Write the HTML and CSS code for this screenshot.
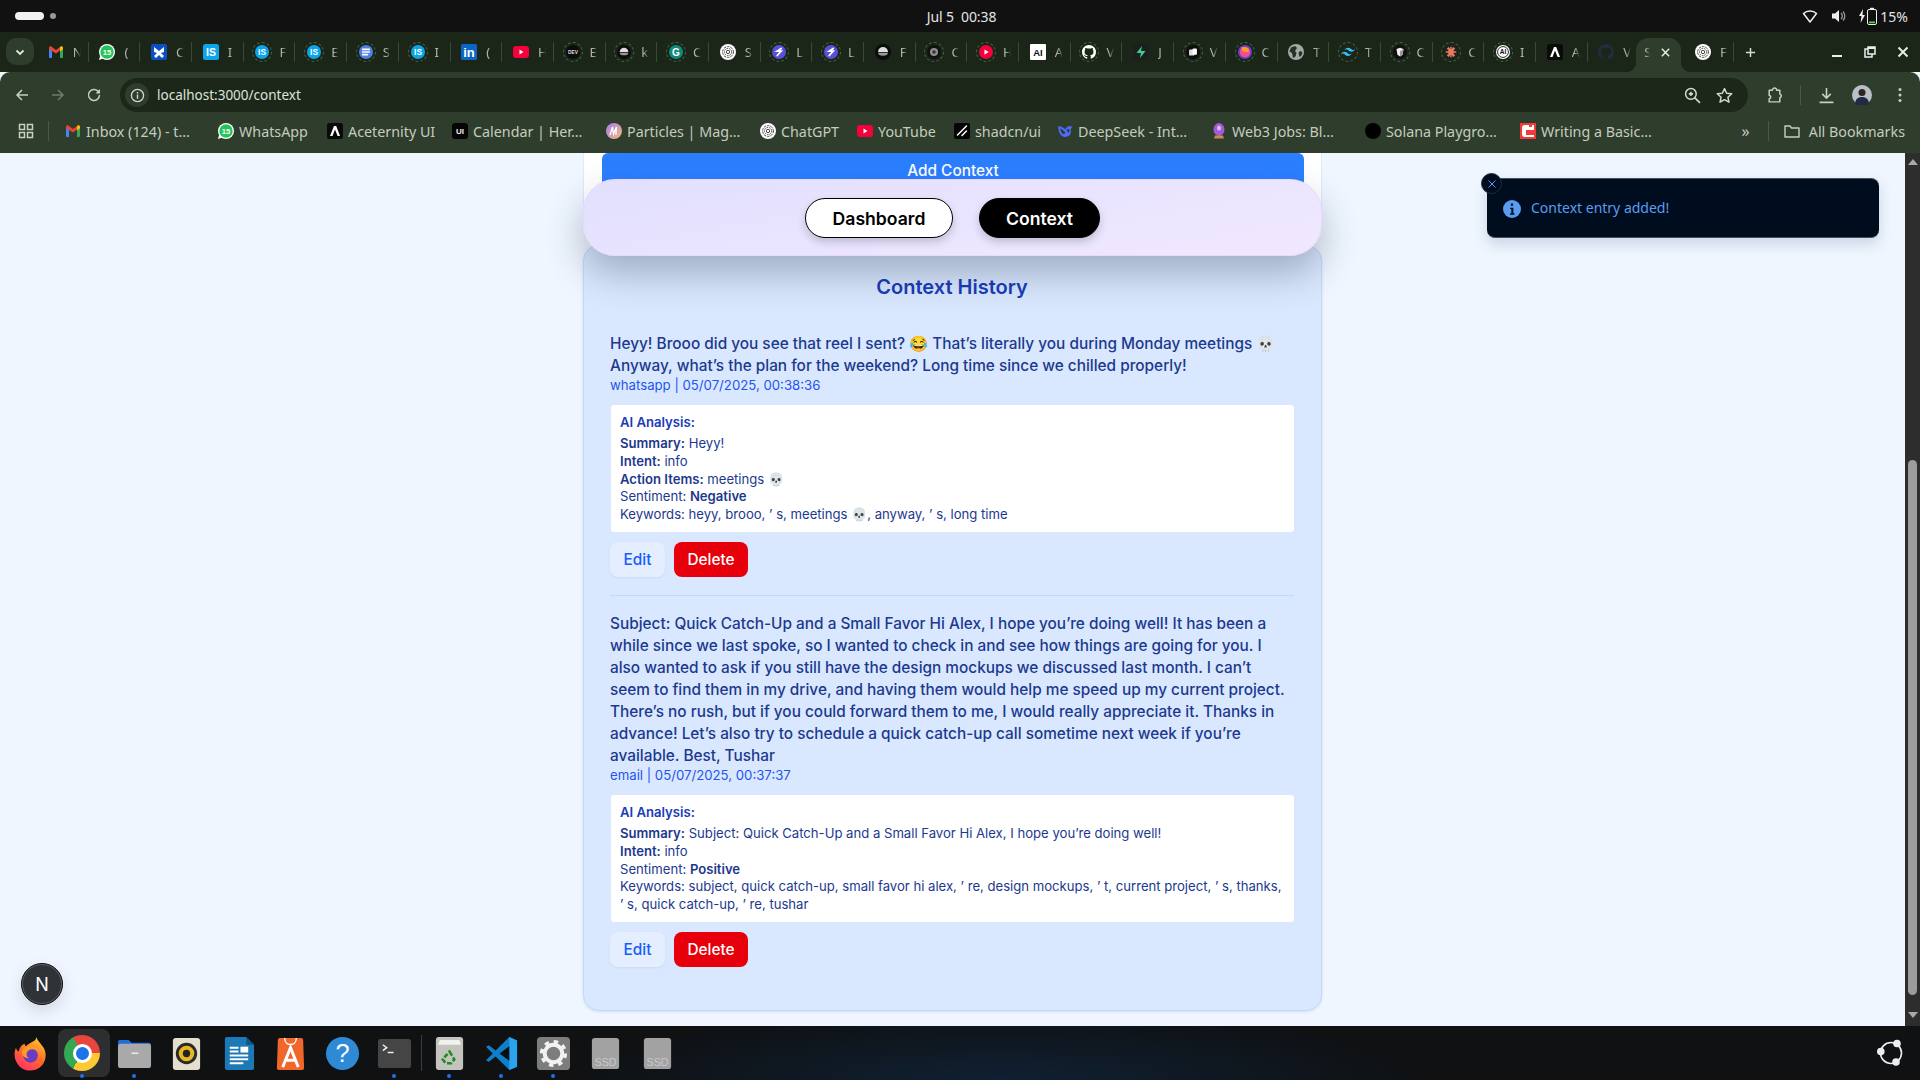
FILE: index.html
```html
<!DOCTYPE html>
<html lang="en">
<head>
<meta charset="utf-8">
<title>Context</title>
<link rel="stylesheet" href="styles.css">
</head>
<body>
<svg class="defs" aria-hidden="true">
  <symbol id="f-gmail" viewBox="0 0 16 16"><path fill="#4285f4" d="M1 5h3v9H2a1 1 0 0 1-1-1z"/><path fill="#34a853" d="M12 5h3v8a1 1 0 0 1-1 1h-2z"/><path fill="#ea4335" d="M1 5.2V3.6C1 2.4 2.4 1.8 3.3 2.5L8 6l4-3v3.6L8 9.6z"/><path fill="#fbbc04" d="M12 3l.7-.5c.9-.7 2.3-.1 2.3 1.1v1.6l-3 2.2z"/></symbol>
  <symbol id="f-wa" viewBox="0 0 16 16"><circle cx="8" cy="8" r="8" fill="#fff"/><circle cx="8" cy="8" r="6.7" fill="#25c45a"/><path fill="#fff" d="M0 16l1.2-4.4 3 3z"/><text x="8" y="10.6" class="svgt" font-size="7.5" fill="#fff" text-anchor="middle">15</text></symbol>
  <symbol id="f-x" viewBox="0 0 16 16"><rect width="16" height="16" rx="2" fill="#0b50c0"/><path fill="#fff" d="M3 3l5 4 5-4v5l-3 1 3 3-2 2-3-3-3 3-2-2 3-3-3-1z"/></symbol>
  <symbol id="f-is" viewBox="0 0 16 16"><rect width="16" height="16" rx="2.5" fill="#0ba5ec"/><text x="8" y="12" class="svgt" font-size="10.5" fill="#fff" text-anchor="middle">IS</text></symbol>
  <symbol id="f-isc" viewBox="0 0 16 16"><circle cx="8" cy="8" r="8" fill="#0ba5ec"/><text x="8" y="11.6" class="svgt" font-size="9.5" fill="#fff" text-anchor="middle">IS</text></symbol>
  <symbol id="f-docs" viewBox="0 0 16 16"><circle cx="8" cy="8" r="8" fill="#4d7fe8"/><path stroke="#fff" stroke-width="1.8" d="M3.5 5h9M3.5 8h9M3.5 11h7"/></symbol>
  <symbol id="f-in" viewBox="0 0 16 16"><rect width="16" height="16" rx="1.5" fill="#0a66c2"/><text x="8" y="13" class="svgt" font-size="13" fill="#fff" text-anchor="middle">in</text></symbol>
  <symbol id="f-yt" viewBox="0 0 16 16"><rect y="2" width="16" height="12" rx="3" fill="#f5003c"/><path fill="#fff" d="M6.5 5.5v5L10.5 8z"/></symbol>
  <symbol id="f-ytc" viewBox="0 0 16 16"><circle cx="8" cy="8" r="8" fill="#f5003c"/><path fill="#fff" d="M6.2 5v6L11 8z"/></symbol>
  <symbol id="f-dev" viewBox="0 0 16 16"><circle cx="8" cy="8" r="8" fill="#0c0c0c"/><text x="8" y="10" class="svgt" font-size="5.6" fill="#ddd" text-anchor="middle">DEV</text></symbol>
  <symbol id="f-k" viewBox="0 0 16 16"><circle cx="8" cy="8" r="8" fill="#0c0c0c"/><path fill="#ddd" d="M3 8a5 5 0 0 1 10 0z"/><path fill="#999" d="M3 8.8h10c0 2-2 3-5 3s-5-1-5-3z"/></symbol>
  <symbol id="f-g" viewBox="0 0 16 16"><circle cx="8" cy="8" r="8" fill="#0f8b7e"/><text x="8" y="12.2" class="svgt" font-size="11.5" fill="#fff" text-anchor="middle">G</text></symbol>
  <symbol id="f-chat" viewBox="0 0 16 16"><circle cx="8" cy="8" r="8" fill="#fff"/><g fill="none" stroke="#333" stroke-width=".9"><circle cx="8" cy="8" r="5.4" stroke-dasharray="2.4 1"/><circle cx="8" cy="8" r="3.6" stroke-dasharray="1.6 .9"/><circle cx="8" cy="8" r="1.7"/></g></symbol>
  <symbol id="f-l" viewBox="0 0 16 16"><circle cx="8" cy="8" r="8" fill="#5b4fd6"/><path fill="none" stroke="#fff" stroke-width="2" stroke-linecap="round" d="M10.5 4 6 7h4.5L6 12"/></symbol>
  <symbol id="f-o" viewBox="0 0 16 16"><circle cx="8" cy="8" r="8" fill="#111"/><circle cx="8" cy="8" r="4.6" fill="#8c8c8c"/><circle cx="8" cy="8" r="2" fill="#333"/></symbol>
  <symbol id="f-anth" viewBox="0 0 16 16"><rect width="16" height="16" rx="1" fill="#fff"/><text x="8" y="11.6" class="svgt" font-size="9.5" fill="#111" text-anchor="middle">AI</text></symbol>
  <symbol id="f-gh" viewBox="0 0 16 16"><path fill="#fff" d="M8 0C3.58 0 0 3.58 0 8c0 3.54 2.29 6.53 5.47 7.59.4.07.55-.17.55-.38 0-.19-.01-.82-.01-1.49-2.01.37-2.53-.49-2.69-.94-.09-.23-.48-.94-.82-1.13-.28-.15-.68-.52-.01-.53.63-.01 1.08.58 1.23.82.72 1.21 1.87.87 2.33.66.07-.52.28-.87.51-1.07-1.78-.2-3.64-.89-3.64-3.95 0-.87.31-1.59.82-2.15-.08-.2-.36-1.02.08-2.12 0 0 .67-.21 2.2.82.64-.18 1.32-.27 2-.27.68 0 1.36.09 2 .27 1.53-1.04 2.2-.82 2.2-.82.44 1.1.16 1.92.08 2.12.51.56.82 1.27.82 2.15 0 3.07-1.87 3.75-3.65 3.95.29.25.54.73.54 1.48 0 1.07-.01 1.93-.01 2.2 0 .21.15.46.55.38A8.013 8.013 0 0 0 16 8c0-4.42-3.58-8-8-8z"/></symbol>
  <symbol id="f-ghd" viewBox="0 0 16 16"><path fill="#222d3d" d="M8 0C3.58 0 0 3.58 0 8c0 3.54 2.29 6.53 5.47 7.59.4.07.55-.17.55-.38 0-.19-.01-.82-.01-1.49-2.01.37-2.53-.49-2.69-.94-.09-.23-.48-.94-.82-1.13-.28-.15-.68-.52-.01-.53.63-.01 1.08.58 1.23.82.72 1.21 1.87.87 2.33.66.07-.52.28-.87.51-1.07-1.78-.2-3.64-.89-3.64-3.95 0-.87.31-1.59.82-2.15-.08-.2-.36-1.02.08-2.12 0 0 .67-.21 2.2.82.64-.18 1.32-.27 2-.27.68 0 1.36.09 2 .27 1.53-1.04 2.2-.82 2.2-.82.44 1.1.16 1.92.08 2.12.51.56.82 1.27.82 2.15 0 3.07-1.87 3.75-3.65 3.95.29.25.54.73.54 1.48 0 1.07-.01 1.93-.01 2.2 0 .21.15.46.55.38A8.013 8.013 0 0 0 16 8c0-4.42-3.58-8-8-8z"/></symbol>
  <symbol id="f-bolt" viewBox="0 0 16 16"><rect width="16" height="16" rx="1.5" fill="#1c1f1f"/><path fill="#3ecf8e" d="M9 2 3.5 9H8l-1 5 5.5-7H8z"/></symbol>
  <symbol id="f-v" viewBox="0 0 16 16"><circle cx="8" cy="8" r="8" fill="#0d0d0d"/><rect x="3.5" y="5" width="6" height="7" rx="1" fill="#ddd"/><rect x="7.5" y="4" width="5" height="7" rx="1" fill="#fff"/></symbol>
  <symbol id="f-arc" viewBox="0 0 16 16"><circle cx="8" cy="8" r="8" fill="#6d3bd6"/><circle cx="8" cy="8" r="6" fill="#f0508c"/><path fill="#ff9a2a" d="M4 2.5h5c3 1 4 3 3 5.5H7C5 7 4 5 4 2.5z"/></symbol>
  <symbol id="f-globe" viewBox="0 0 16 16"><circle cx="8" cy="8" r="8" fill="#a3a9a0"/><path fill="#26302a" d="M3 3.5 7 2l2 2-2 3 1.500 2-1 3.500L5 14 4 9 1.500 7.500zM12 7l2.500 1-1 3.500L11.500 13 10.500 9z"/></symbol>
  <symbol id="f-tw" viewBox="0 0 16 16"><path fill="#38bdf8" d="M8 3C5.900 3 4.500 4.100 4 6.200 4.800 5.100 5.700 4.700 6.800 5c.6.150 1 .6 1.500 1.100C9.100 6.900 10 7.800 12 7.800c2.100 0 3.500-1.100 4-3.200-.8 1.100-1.700 1.500-2.800 1.200-.6-.15-1-.6-1.500-1.100C10.900 3.900 10 3 8 3zM4 7.800c-2.100 0-3.500 1.100-4 3.200.8-1.100 1.700-1.500 2.800-1.200.6.150 1 .6 1.500 1.100.8.800 1.700 1.700 3.700 1.700 2.100 0 3.500-1.100 4-3.200-.8 1.100-1.700 1.500-2.800 1.200-.6-.15-1-.6-1.500-1.100C6.900 8.700 6 7.800 4 7.800z"/></symbol>
  <symbol id="f-cube" viewBox="0 0 16 16"><circle cx="8" cy="8" r="8" fill="#101010"/><path fill="#eee" d="M4 4.500 8 3l4 1.500L11 11l-3 2-3-2z"/><path fill="#999" d="M8 7v6l3-2 1-6.500z"/></symbol>
  <symbol id="f-sp" viewBox="0 0 16 16"><circle cx="8" cy="8" r="8" fill="#1f2420"/><path stroke="#e9795d" stroke-width="1.600" d="M8 2v12M2 8h12M3.800 3.800l8.400 8.400M12.200 3.800l-8.400 8.400M5 2.700l6 10.600M11 2.700 5 13.300"/><circle cx="8" cy="8" r="3.200" fill="#e9795d"/></symbol>
  <symbol id="f-aic" viewBox="0 0 16 16"><circle cx="8" cy="8" r="8" fill="#fff"/><circle cx="8" cy="8" r="6.200" fill="none" stroke="#111"/><text x="8" y="10.800" class="svgt" font-size="7.500" fill="#111" text-anchor="middle">AI</text></symbol>
  <symbol id="f-ace" viewBox="0 0 16 16"><rect width="16" height="16" rx="2.500" fill="#0a0a0a"/><path fill="#fff" d="M7 3h2.200L13 13h-2.400L8 6.500 5.500 13H3z"/><path fill="#0a0a0a" d="M7.400 13 8.200 8.600l.6 4.400z"/></symbol>
  <symbol id="f-ui" viewBox="0 0 16 16"><rect width="16" height="16" rx="3" fill="#050505"/><text x="8" y="11.200" class="svgt" font-size="8" fill="#eee" text-anchor="middle">UI</text></symbol>
  <symbol id="f-magic" viewBox="0 0 16 16"><defs><linearGradient id="mg" x1="0" y1="0" x2="1" y2="1"><stop offset="0" stop-color="#a37bf5"/><stop offset="1" stop-color="#fdbb74"/></linearGradient></defs><circle cx="8" cy="8" r="8" fill="url(#mg)"/><path fill="none" stroke="#fff" stroke-width="1.300" d="M4 12l2.500-8 1 7 3-7-.6 8"/></symbol>
  <symbol id="f-sh" viewBox="0 0 16 16"><rect width="16" height="16" rx="2" fill="#050505"/><path stroke="#fff" stroke-width="1.500" stroke-linecap="round" d="M12.500 3 3.500 12M12.500 8 8 12.500"/></symbol>
  <symbol id="f-ds" viewBox="0 0 16 16"><path fill="#4d6bfe" d="M15.500 3c-.6.300-1 .2-1.500.8-1-1-2.500-.8-3.500 0L8.200 6.200C6.500 5 4.500 3.500 1.500 3 1 6 2 11 5 13c2 1.300 5 1.200 7-.2 2-1.500 2.300-4.500 1.400-6.400.7-.5 1.700-2 2.100-3.400zM6 11C4.500 10.300 3.300 7.500 3.200 5.500c2 .8 4 2.400 5.300 4.300C7.800 10.600 7 11.400 6 11zm5.200-1c-.3-1-1-2-1.800-2.800l1.500-1.500c.8.200 1.500 1 1.500 2 0 1-.5 1.800-1.200 2.300z"/></symbol>
  <symbol id="f-web3" viewBox="0 0 16 16"><ellipse cx="8" cy="6.500" rx="5.500" ry="6.500" fill="#a05cd6"/><ellipse cx="8" cy="5" rx="2" ry="2.500" fill="#e6b8f5"/><path fill="#c98a4a" d="M4 12.500h8l1 3H3z"/></symbol>
  <symbol id="f-sol" viewBox="0 0 16 16"><circle cx="8" cy="8" r="8" fill="#000"/></symbol>
  <symbol id="f-wr" viewBox="0 0 16 16"><rect width="16" height="16" fill="#f03a3a"/><path fill="#fff" d="M5 2h4v2h3v-2h2v5H6v5h8v2H5a3 3 0 0 1-3-3V5a3 3 0 0 1 3-3z"/></symbol>
</svg>

<header class="status">
  <div class="workspaces"><span class="ws-pill"></span><span class="ws-dot"></span></div>
  <div class="clock">Jul 5&nbsp; 00:38</div>
  <div class="tray">
    <svg class="tray-i" viewBox="0 0 16 16"><path fill="none" stroke="#eee" stroke-width="1.500" stroke-linejoin="round" d="M1.500 5.500C5 2 11 2 14.500 5.500L8 14z"/></svg>
    <svg class="tray-i" viewBox="0 0 16 16"><path fill="#eee" d="M2 5.500h3L9 2v12l-4-3.500H2z"/><path fill="none" stroke="#999" stroke-width="1.300" d="M11 5a4 4 0 0 1 0 6M13 3.500a6.500 6.500 0 0 1 0 9"/></svg>
    <svg class="tray-b" viewBox="0 0 20 18"><path fill="#eee" d="M5 2 1 9h2.500L2.500 16 7 8H4.500z"/><rect x="9.500" y="2.500" width="9" height="15" rx="1.500" fill="none" stroke="#eee"/><rect x="12" y=".8" width="4" height="1.700" fill="#eee"/><rect x="11" y="14.500" width="6" height="1.700" fill="#4ade4a"/></svg>
    <span class="batt">15%</span>
  </div>
</header>

<div class="tabstrip">
  <button class="tab-list" aria-label="Search tabs"><svg viewBox="0 0 12 12"><path fill="none" stroke="#dfe5da" stroke-width="1.800" d="M2.500 4.500 6 8l3.500-3.500"/></svg></button>
  <div class="tabs">
    <div class="tab"><span class="fav"><svg><use href="#f-gmail"/></svg></span><span class="tl">N</span></div>
    <div class="tab"><span class="fav"><svg><use href="#f-wa"/></svg></span><span class="tl">(</span></div>
    <div class="tab"><span class="fav"><svg><use href="#f-x"/></svg></span><span class="tl">C</span></div>
    <div class="tab"><span class="fav"><svg><use href="#f-is"/></svg></span><span class="tl">I</span></div>
    <div class="tab"><span class="fav ring"><svg><use href="#f-isc"/></svg></span><span class="tl">F</span></div>
    <div class="tab"><span class="fav ring"><svg><use href="#f-isc"/></svg></span><span class="tl">E</span></div>
    <div class="tab"><span class="fav ring"><svg><use href="#f-docs"/></svg></span><span class="tl">S</span></div>
    <div class="tab"><span class="fav ring"><svg><use href="#f-isc"/></svg></span><span class="tl">I</span></div>
    <div class="tab"><span class="fav"><svg><use href="#f-in"/></svg></span><span class="tl">(</span></div>
    <div class="tab"><span class="fav"><svg><use href="#f-yt"/></svg></span><span class="tl">H</span></div>
    <div class="tab"><span class="fav ring"><svg><use href="#f-dev"/></svg></span><span class="tl">E</span></div>
    <div class="tab"><span class="fav ring"><svg><use href="#f-k"/></svg></span><span class="tl">k</span></div>
    <div class="tab"><span class="fav ring"><svg><use href="#f-g"/></svg></span><span class="tl">C</span></div>
    <div class="tab"><span class="fav"><svg><use href="#f-chat"/></svg></span><span class="tl">S</span></div>
    <div class="tab"><span class="fav ring"><svg><use href="#f-l"/></svg></span><span class="tl">L</span></div>
    <div class="tab"><span class="fav ring"><svg><use href="#f-l"/></svg></span><span class="tl">L</span></div>
    <div class="tab"><span class="fav"><svg><use href="#f-k"/></svg></span><span class="tl">F</span></div>
    <div class="tab"><span class="fav ring"><svg><use href="#f-o"/></svg></span><span class="tl">C</span></div>
    <div class="tab"><span class="fav ring"><svg><use href="#f-ytc"/></svg></span><span class="tl">H</span></div>
    <div class="tab"><span class="fav"><svg><use href="#f-anth"/></svg></span><span class="tl">A</span></div>
    <div class="tab"><span class="fav ring"><svg><use href="#f-gh"/></svg></span><span class="tl">V</span></div>
    <div class="tab"><span class="fav"><svg><use href="#f-bolt"/></svg></span><span class="tl">J</span></div>
    <div class="tab"><span class="fav ring"><svg><use href="#f-v"/></svg></span><span class="tl">V</span></div>
    <div class="tab"><span class="fav ring"><svg><use href="#f-arc"/></svg></span><span class="tl">C</span></div>
    <div class="tab"><span class="fav"><svg><use href="#f-globe"/></svg></span><span class="tl">T</span></div>
    <div class="tab"><span class="fav ring"><svg><use href="#f-tw"/></svg></span><span class="tl">T</span></div>
    <div class="tab"><span class="fav ring"><svg><use href="#f-cube"/></svg></span><span class="tl">C</span></div>
    <div class="tab"><span class="fav ring"><svg><use href="#f-sp"/></svg></span><span class="tl">C</span></div>
    <div class="tab"><span class="fav ring"><svg><use href="#f-aic"/></svg></span><span class="tl">I</span></div>
    <div class="tab"><span class="fav"><svg><use href="#f-ace"/></svg></span><span class="tl">A</span></div>
    <div class="tab tab-last"><span class="fav"><svg><use href="#f-ghd"/></svg></span><span class="tl">V</span></div>
    <div class="tab-active"><span class="tl tl-act">S</span><svg class="tab-x" viewBox="0 0 12 12"><path stroke="#e6ebe2" stroke-width="1.600" d="M2 2l8 8M10 2l-8 8"/></svg></div>
    <div class="tab tab-after"><span class="fav"><svg><use href="#f-chat"/></svg></span><span class="tl">F</span></div>
    <svg class="tab-new" viewBox="0 0 12 12"><path stroke="#d6ddd0" stroke-width="1.600" d="M6 1v10M1 6h10"/></svg>
  </div>
  <div class="winctl">
    <svg viewBox="0 0 12 12"><path stroke="#eee" stroke-width="2" d="M1 10h10"/></svg>
    <svg viewBox="0 0 12 12"><path fill="none" stroke="#eee" stroke-width="1.500" d="M4 1h7v7H4zM4 3H1v8h7V8"/><path fill="#eee" d="M4 1h7v2H4z"/></svg>
    <svg viewBox="0 0 12 12"><path stroke="#eee" stroke-width="1.800" d="M1.500 1.500l9 9M10.500 1.500l-9 9"/></svg>
  </div>
</div>

<div class="toolbar">
  <div class="navrow">
    <div class="nav-btns">
      <svg viewBox="0 0 16 16"><path fill="none" stroke="#c8d0c2" stroke-width="1.500" d="M14 8H3M8 3 3 8l5 5"/></svg>
      <svg viewBox="0 0 16 16"><path fill="none" stroke="#6f7b6a" stroke-width="1.500" d="M2 8h11M8 3l5 5-5 5"/></svg>
      <svg viewBox="0 0 16 16"><path fill="none" stroke="#c8d0c2" stroke-width="1.500" d="M13.500 8a5.500 5.500 0 1 1-1.600-3.900L13.500 5.700"/><path fill="#c8d0c2" d="M14 2v4.500H9.500z"/></svg>
    </div>
    <div class="omnibox">
      <span class="site-info"><svg viewBox="0 0 16 16"><circle cx="8" cy="8" r="6.500" fill="none" stroke="#d3dacd" stroke-width="1.400"/><path stroke="#d3dacd" stroke-width="1.500" d="M8 7v4.500M8 4.300v1.500"/></svg></span>
      <span class="url">localhost:3000/context</span>
      <div class="omni-end">
        <svg viewBox="0 0 16 16"><circle cx="6.500" cy="6.500" r="5" fill="none" stroke="#d3dacd" stroke-width="1.400"/><path stroke="#d3dacd" stroke-width="1.500" d="M10 10l5 5M4.500 6.500h4M6.500 4.500v4"/></svg>
        <svg viewBox="0 0 16 16"><path fill="none" stroke="#d3dacd" stroke-width="1.400" stroke-linejoin="round" d="M8 1.500l2 4.400 4.800.5-3.600 3.200 1 4.700L8 11.900l-4.200 2.400 1-4.700L1.200 6.400 6 5.900z"/></svg>
      </div>
    </div>
    <div class="tool-end">
      <svg class="t-ext" viewBox="0 0 16 16"><path fill="none" stroke="#c8d0c2" stroke-width="1.400" stroke-linejoin="round" d="M3 3h3a2 2 0 0 1 4 0h3v3.500a1.800 1.800 0 0 1 0 3.500V14H3v-3a1.500 1.500 0 0 0 0-3z"/></svg>
      <span class="t-sep"></span>
      <svg class="t-dl" viewBox="0 0 16 16"><path fill="none" stroke="#c8d0c2" stroke-width="1.500" d="M8 1v9M4 6.500 8 10.500l4-4M1.500 14.500h13"/></svg>
      <svg class="t-av" viewBox="0 0 20 20"><circle cx="10" cy="10" r="10" fill="#b9c0c8"/><circle cx="10" cy="7.500" r="3.500" fill="#2b2520"/><path fill="#1f2b44" d="M3 20c0-6 3-8 7-8s7 2 7 8z"/></svg>
      <svg class="t-more" viewBox="0 0 4 16"><circle cx="2" cy="2.500" r="1.500" fill="#c8d0c2"/><circle cx="2" cy="8" r="1.500" fill="#c8d0c2"/><circle cx="2" cy="13.500" r="1.500" fill="#c8d0c2"/></svg>
    </div>
  </div>
  <div class="bookmarks">
    <svg class="bm-apps" viewBox="0 0 16 16"><path fill="none" stroke="#c8d0c2" stroke-width="1.500" d="M1.500 1.500h5v5h-5zM9.500 1.500h5v5h-5zM1.500 9.500h5v5h-5zM9.500 9.500h5v5h-5z"/></svg>
    <span class="bm-sep"></span>
    <div class="bm-list">
      <div class="bm"><svg><use href="#f-gmail"/></svg><span>Inbox (124) - t…</span></div>
      <div class="bm"><svg><use href="#f-wa"/></svg><span>WhatsApp</span></div>
      <div class="bm"><svg><use href="#f-ace"/></svg><span>Aceternity UI</span></div>
      <div class="bm"><svg><use href="#f-ui"/></svg><span>Calendar | Her…</span></div>
      <div class="bm"><svg><use href="#f-magic"/></svg><span>Particles | Mag…</span></div>
      <div class="bm"><svg><use href="#f-chat"/></svg><span>ChatGPT</span></div>
      <div class="bm"><svg><use href="#f-yt"/></svg><span>YouTube</span></div>
      <div class="bm"><svg><use href="#f-sh"/></svg><span>shadcn/ui</span></div>
      <div class="bm"><svg><use href="#f-ds"/></svg><span>DeepSeek - Int…</span></div>
      <div class="bm"><svg><use href="#f-web3"/></svg><span>Web3 Jobs: Bl…</span></div>
      <div class="bm"><svg><use href="#f-sol"/></svg><span>Solana Playgro…</span></div>
      <div class="bm"><svg><use href="#f-wr"/></svg><span>Writing a Basic…</span></div>
    </div>
    <div class="bm-end">
      <span class="bm-more">»</span>
      <span class="bm-sep"></span>
      <div class="bm bm-all"><svg viewBox="0 0 16 16"><path fill="none" stroke="#c8d0c2" stroke-width="1.400" stroke-linejoin="round" d="M1 3h5l1.500 2H15v9H1z"/></svg><span>All Bookmarks</span></div>
    </div>
  </div>
</div>

<div class="viewport">
  <main class="page">
    <div class="column">
      <section class="form-card">
        <button class="add-btn">Add Context</button>
      </section>
      <section class="history">
        <h2>Context History</h2>

        <article class="entry">
          <p class="msg">Heyy! Brooo did you see that reel I sent? 😂 That’s literally you during Monday meetings 💀 Anyway, what’s the plan for the weekend? Long time since we chilled properly!</p>
          <p class="meta">whatsapp | 05/07/2025, 00:38:36</p>
          <div class="analysis">
            <h3>AI Analysis:</h3>
            <p><b>Summary:</b> Heyy!</p>
            <p><b>Intent:</b> info</p>
            <p><b>Action Items:</b> meetings 💀</p>
            <p>Sentiment: <b>Negative</b></p>
            <p>Keywords: heyy, brooo, ’ s, meetings 💀, anyway, ’ s, long time</p>
          </div>
          <div class="actions"><button class="btn-edit">Edit</button><button class="btn-del">Delete</button></div>
        </article>

        <article class="entry">
          <p class="msg">Subject: Quick Catch-Up and a Small Favor Hi Alex, I hope you’re doing well! It has been a while since we last spoke, so I wanted to check in and see how things are going for you. I also wanted to ask if you still have the design mockups we discussed last month. I can’t seem to find them in my drive, and having them would help me speed up my current project. There’s no rush, but if you could forward them to me, I would really appreciate it. Thanks in advance! Let’s also try to schedule a quick catch-up call sometime next week if you’re available. Best, Tushar</p>
          <p class="meta">email | 05/07/2025, 00:37:37</p>
          <div class="analysis">
            <h3>AI Analysis:</h3>
            <p><b>Summary:</b> Subject: Quick Catch-Up and a Small Favor Hi Alex, I hope you’re doing well!</p>
            <p><b>Intent:</b> info</p>
            <p>Sentiment: <b>Positive</b></p>
            <p>Keywords: subject, quick catch-up, small favor hi alex, ’ re, design mockups, ’ t, current project, ’ s, thanks, ’ s, quick catch-up, ’ re, tushar</p>
          </div>
          <div class="actions"><button class="btn-edit">Edit</button><button class="btn-del">Delete</button></div>
        </article>
      </section>
    </div>
  </main>

  <div class="scrollbar">
    <span class="sb-up"></span>
    <span class="sb-thumb"></span>
    <span class="sb-down"></span>
  </div>

  <nav class="floatnav">
    <a class="pill pill-light">Dashboard</a>
    <a class="pill pill-dark">Context</a>
  </nav>

  <div class="toast">
    <span class="toast-x"><svg viewBox="0 0 10 10"><path stroke="#5b9cf0" stroke-width="1" d="M1.500 1.500l7 7M8.500 1.500l-7 7"/></svg></span>
    <svg class="toast-i" viewBox="0 0 16 16"><circle cx="8" cy="8" r="8" fill="#5b9cf0"/><path fill="#00102a" d="M7 3.200h2v2H7zM6.300 6.800h2.900v5h1v1.200H6.300v-1.200h1.100V8H6.300z"/></svg>
    <span class="toast-t">Context entry added!</span>
  </div>

  <div class="next-badge">N</div>
</div>

<footer class="dock">
  <div class="dock-item">
    <svg viewBox="0 0 36 36"><defs><linearGradient id="ffx" x1="0.700" y1="0" x2="0.200" y2="1"><stop offset="0" stop-color="#ffc22e"/><stop offset=".5" stop-color="#ff6a2a"/><stop offset="1" stop-color="#ff2d6a"/></linearGradient></defs><path fill="url(#ffx)" d="M24 1c1 4 5 7 7.500 11 4 7 2 16-4 20.500-6 4.500-15 4-20.500-1C1 26 .5 18 3 12c.5 2 1.500 3 3 4 .5-4 3-7 6-8 0 1 .5 2 1.500 2.500C17 6 24 6 24 1z"/><circle cx="18" cy="20" r="7.500" fill="#6a3bc4"/><path fill="#ff9a2a" d="M9 17c1-5 6-8 12-6 3 1 5 3 6 6-3-3-6-4-9-3-3 1-4 3-4 5 0 2 1 3 3 4-5 0-8-3-8-6z"/></svg>
  </div>
  <div class="dock-item dock-act dock-on"><span class="chrome"><span class="chrome-c"></span></span></div>
  <div class="dock-item dock-on">
    <svg viewBox="0 0 36 36"><path fill="#1f6fd6" d="M1 6a2 2 0 0 1 2-2h9l3 3h18a2 2 0 0 1 2 2v6H1z"/><rect x="1" y="8" width="34" height="25" rx="3" fill="#a9a9a9"/><rect x="15" y="17" width="7" height="1.500" fill="#eee"/></svg>
  </div>
  <div class="dock-item">
    <svg viewBox="0 0 36 36"><rect x="4" y="2" width="28" height="33" rx="3" fill="#e5dfcf"/><circle cx="18" cy="18" r="11" fill="#2a2a2a"/><circle cx="18" cy="18" r="8" fill="#e9b820"/><circle cx="18" cy="18" r="3.800" fill="#222"/></svg>
  </div>
  <div class="dock-item">
    <svg viewBox="0 0 36 36"><path fill="#1c79b5" d="M4 3a2 2 0 0 1 2-2h20l8 8v24a2 2 0 0 1-2 2H6a2 2 0 0 1-2-2z"/><path fill="#0e5585" d="M26 1l8 8h-8z"/><path stroke="#fff" stroke-width="2" d="M9 12h9M9 16h9M9 20h19M9 24h19M9 28h14"/><rect x="20" y="11" width="8" height="6" fill="#fff"/></svg>
  </div>
  <div class="dock-item">
    <svg viewBox="0 0 36 36"><path fill="#f0662b" d="M5 4a2 2 0 0 1 2-2h22a2 2 0 0 1 2 2l1 29a2 2 0 0 1-2 2H6a2 2 0 0 1-2-2z"/><path fill="none" stroke="#fff" stroke-width="1.500" d="M12 2c0 9 12 9 12 0"/><path fill="none" stroke="#fff" stroke-width="3" d="M10 32l8-20 8 20M12 25h12"/></svg>
  </div>
  <div class="dock-item">
    <svg viewBox="0 0 36 36"><circle cx="18" cy="18" r="17" fill="#2f8ad6"/><text x="18" y="27" class="svgh" font-size="26" fill="#fff" text-anchor="middle">?</text></svg>
  </div>
  <div class="dock-item dock-on">
    <svg viewBox="0 0 36 36"><rect x="1" y="3" width="34" height="30" rx="3" fill="#454545"/><path fill="none" stroke="#eee" stroke-width="1.500" d="M6 9l4 3-4 3M11 17h6"/></svg>
  </div>
  <span class="dock-sep"></span>
  <div class="dock-item dock-on">
    <svg viewBox="0 0 36 36"><rect x="4" y="1" width="28" height="34" rx="3" fill="#c4c4bf"/><path fill="#f1f1ed" d="M8 4h20l2 5H6z"/><path fill="none" stroke="#1f8a1f" stroke-width="2.600" stroke-dasharray="5 2" d="M18 16l5 8-3 4h-6l-3-4z"/></svg>
  </div>
  <div class="dock-item dock-on">
    <svg viewBox="0 0 36 36"><path fill="#0e7fc9" d="M26 1 12 15 5 9.500 2 11l7 7-7 7 3 1.500 7-5.500 14 14 8-3.500V4.500z"/><path fill="#2aa4ee" d="M26 1l8 3.500v27L26 35z"/><path fill="#0a0d12" d="M26 10.500 16 18l10 7.500z"/></svg>
  </div>
  <div class="dock-item dock-on">
    <svg viewBox="0 0 36 36"><rect x="1" y="1" width="34" height="34" rx="4" fill="#7d7d7d"/><circle cx="18" cy="18" r="9" fill="none" stroke="#f2f2f2" stroke-width="4"/><circle cx="18" cy="18" r="12" fill="none" stroke="#f2f2f2" stroke-width="4" stroke-dasharray="4.500 4.900"/></svg>
  </div>
  <div class="dock-item">
    <svg viewBox="0 0 36 36"><rect x="4" y="2" width="28" height="32" rx="3" fill="#a2a2a2"/><text x="18" y="31" class="svgs" font-size="11" fill="#c9c9c9" text-anchor="middle">SSD</text></svg>
  </div>
  <div class="dock-item">
    <svg viewBox="0 0 36 36"><rect x="4" y="2" width="28" height="32" rx="3" fill="#a2a2a2"/><text x="18" y="31" class="svgs" font-size="11" fill="#c9c9c9" text-anchor="middle">SSD</text></svg>
  </div>
  <svg class="dock-os" viewBox="0 0 28 28"><circle cx="14" cy="14" r="10.500" fill="none" stroke="#eee" stroke-width="1.600"/><circle cx="20" cy="4.500" r="3.800" fill="#eee"/><circle cx="3.800" cy="12.500" r="3.800" fill="#eee"/><circle cx="19" cy="23" r="3.800" fill="#eee"/></svg>
</footer>
</body>
</html>
```

FILE: styles.css
```css
* { box-sizing: border-box; }
html, body { margin: 0; height: 100%; }
body {
  width: 1920px; height: 1080px; overflow: hidden;
  display: flex; flex-direction: column;
  font-family: Inter, "Noto Sans", sans-serif;
  background: #eff6ff;
}
.defs { position: absolute; width: 0; height: 0; }
.svgt { font-family: "Liberation Sans", sans-serif; font-weight: 700; }
.svgh { font-family: "Liberation Sans", sans-serif; }
.svgs { font-family: "Liberation Sans", sans-serif; }

/* system bar */
.status {
  height: 32px; flex: none; background: #111111; color: #e4e4e4;
  display: grid; grid-template-columns: 1fr auto 1fr; align-items: center;
  padding: 0 12px 0 15px;
  font-family: "Noto Sans", sans-serif; font-size: 14px;
}
.workspaces { display: flex; align-items: center; gap: 6px; }
.ws-pill { width: 29px; height: 8px; border-radius: 4px; background: #f2f2f2; }
.ws-dot { width: 6px; height: 6px; border-radius: 50%; background: #9a9a9a; }
.clock { letter-spacing: -.1px; }
.tray { display: flex; justify-content: flex-end; align-items: center; }
.tray-i { width: 16px; height: 16px; margin-right: 12px; }
.tray-b { width: 20px; height: 18px; margin-right: 2px; }
.batt { font-size: 14px; }

/* tabs */
.tabstrip {
  height: 40px; flex: none; background: #1b2619; display: flex; align-items: center;
  padding-left: 6px; color: #aeb7a8;
  font-family: "Noto Sans", sans-serif; font-size: 13px;
}
.tab-list {
  width: 28px; height: 27px; margin: -1px 3px 0 0; padding: 0; border: 0; border-radius: 10px;
  background: #2f3d2d; display: flex; align-items: center; justify-content: center;
}
.tab-list svg { width: 12px; height: 12px; }
.tabs { display: flex; align-items: center; height: 100%; }
.tab {
  width: 51.7px; height: 20px; display: flex; align-items: center; gap: 7px; padding-left: 8.7px;
  border-right: 1px solid #3a4a38;
}
.tab-last { border-right: 0; }
.fav { width: 20px; height: 20px; flex: none; display: flex; align-items: center; justify-content: center; }
.fav svg { width: 16px; height: 16px; }
.ring { border: 1.500px dashed #41704a; border-radius: 50%; }
.ring svg { width: 14px; height: 14px; }
.tl {
  width: 8px; overflow: hidden; white-space: nowrap;
  -webkit-mask-image: linear-gradient(90deg, #000 35%, transparent 100%);
  mask-image: linear-gradient(90deg, #000 35%, transparent 100%);
}
.tab-active {
  align-self: flex-end; width: 45px; height: 34px; margin-left: -3px; position: relative;
  background: #2f3d2d; border-radius: 12px 12px 0 0;
  display: flex; align-items: center; padding: 0 0 6px 8px; gap: 10px;
}
.tab-active::before, .tab-active::after {
  content: ""; position: absolute; bottom: 0; width: 10px; height: 10px;
}
.tab-active::before { left: -10px; background: radial-gradient(circle at 0 0, transparent 10px, #2f3d2d 10.500px); }
.tab-active::after { right: -10px; background: radial-gradient(circle at 100% 0, transparent 10px, #2f3d2d 10.500px); }
.tl-act { width: 6px; }
.tab-x { width: 11px; height: 11px; }
.tab-after { margin-left: 3px; width: 50px; }
.tab-new { width: 11px; height: 11px; margin-left: 11px; }
.winctl { margin-left: auto; display: flex; align-items: center; padding-right: 11px; gap: 21px; }
.winctl svg { width: 12px; height: 12px; }

/* toolbar */
.toolbar { height: 81px; flex: none; background: #2f3d2d; border-radius: 10px 10px 0 0; display: flex; flex-direction: column; color: #c4ccbe; }
.navrow { height: 40px; padding: 6px 0 0 4px; display: flex; }
.nav-btns { display: flex; width: 116px; flex: none; align-items: center; }
.nav-btns svg { width: 16px; height: 16px; margin: 0 10px; }
.omnibox {
  flex: 1; display: flex; align-items: center; background: #1c271a; border-radius: 17px; padding: 0 15px 0 5px;
  font-family: "Noto Sans", sans-serif; font-size: 13.500px; color: #dde3d8;
}
.site-info { width: 24px; height: 24px; border-radius: 50%; background: #2f3d2d; display: flex; align-items: center; justify-content: center; }
.site-info svg { width: 15px; height: 15px; }
.url { margin-left: 8px; }
.omni-end { margin-left: auto; display: flex; gap: 15px; align-items: center; }
.omni-end svg { width: 17px; height: 17px; }
.tool-end { width: 172px; flex: none; display: flex; align-items: center; padding-left: 18px; }
.t-ext { width: 17px; height: 17px; }
.t-sep { width: 1px; height: 20px; background: #4a5a47; margin: 0 17px; }
.t-dl { width: 17px; height: 17px; }
.t-av { width: 20px; height: 20px; margin-left: 17px; }
.t-more { width: 4px; height: 16px; margin-left: 26px; }
.bookmarks {
  flex: 1; display: flex; align-items: center; padding-left: 18px;
  font-family: "Noto Sans", sans-serif; font-size: 14.300px; padding-bottom: 3px;
}
.bm-apps { width: 16px; height: 16px; margin-right: 14px; }
.bm-sep { width: 1px; height: 20px; background: #4a5a47; }
.bm-list {
  margin-left: 16px; display: grid;
  grid-template-columns: 153px 109px 125px 154px 154px 97px 97px 103px 154px 154px 155px 200px;
}
.bm { display: flex; align-items: center; gap: 5px; white-space: nowrap; }
.bm svg { width: 16px; height: 16px; flex: none; }
.bm-end { margin-left: auto; display: flex; align-items: center; padding-right: 15px; }
.bm-more { font-size: 16px; margin-right: 18px; }
.bm-all { margin-left: 15px; gap: 9px; }

/* page */
.viewport { flex: 1; min-height: 0; display: flex; position: relative; overflow: hidden; }
.page { flex: 1; min-width: 0; display: flex; justify-content: center; }
.column { width: 739px; }
.form-card {
  height: 77px; background: #fff; padding: 0 17px 0 18px;
  border: solid #dbeafe; border-width: 0 1px;
}
.add-btn {
  display: block; width: 100%; height: 34px; border: 0; border-radius: 6px;
  background: #2b7fff; color: #fff; font: 500 15.360px Inter, sans-serif;
}
.history {
  margin-top: 15px; height: 766px; padding: 27px 27px 0 26px;
  background: #d9e8fe; border: 1px solid #bedbff; border-radius: 16px;
  box-shadow: 0 1px 3px rgba(30, 60, 120, .12);
}
.history h2 { margin: 0 0 32px; font-size: 20px; font-weight: 600; line-height: 28px; text-align: center; color: #193cb8; }
.entry + .entry { margin-top: 17px; }
.entry:first-of-type { padding-bottom: 18px; border-bottom: 1px solid #bedbff; }
.msg { margin: 0; font-size: 15.360px; font-weight: 500; line-height: 22px; color: #1c398e; }
.meta { margin: -1px 0 11px; font-size: 13.200px; line-height: 18px; color: #1f55ee; }
.analysis { background: #fff; border-radius: 3px; padding: 8px 10px 8px 9px; height: 127px; margin: 0 0 0 1px; font-size: 13.120px; line-height: 17.800px; color: #1c398e; }
.analysis h3 { margin: 0 0 4px; font-size: 13.120px; font-weight: 600; line-height: 18px; color: #193cb8; }
.analysis p { margin: 0; }
.analysis b { font-weight: 600; }
.actions { display: flex; gap: 9px; margin-top: 10px; }
.actions button { height: 35px; border: 0; border-radius: 8px; font: 500 15.360px Inter, sans-serif; padding: 0; }
.btn-edit { width: 55px; background: #e4eefe; color: #155dfc; box-shadow: 0 1px 2px rgba(30, 60, 120, .08); }
.btn-del { width: 74px; background: #e7000b; color: #fff; }

/* scrollbar */
.scrollbar { width: 15px; flex: none; background: #2d2d2d; display: flex; flex-direction: column; align-items: center; padding-top: 6px; }
.sb-up, .sb-down { width: 0; height: 0; border: 5px solid transparent; }
.sb-up { border-bottom: 6px solid #a8a8a8; border-top: 0; }
.sb-down { border-top: 6px solid #a8a8a8; border-bottom: 0; margin-top: 17px; }
.sb-thumb { width: 9px; height: 535px; margin-top: 295px; background: #9c9c9c; border-radius: 5px; }

/* overlays */
.floatnav {
  position: absolute; left: 583px; top: 26px; width: 739px; height: 77px;
  display: flex; justify-content: center; align-items: center; gap: 26px; padding-top: 1px;
  background: linear-gradient(170deg, #e2e0ff 0%, #f0e8fe 100%);
  border: 1px solid #ead9fb; border-radius: 32px;
  box-shadow: 0 18px 36px rgba(30, 40, 70, .3);
}
.pill {
  height: 40px; display: flex; align-items: center; justify-content: center;
  border-radius: 20px; font-size: 17.600px; font-weight: 600; border: 1px solid #000;
  box-shadow: 0 4px 8px rgba(0, 0, 0, .18);
}
.pill-light { width: 148px; background: #fff; color: #000; }
.pill-dark { width: 121px; background: #000; color: #fff; }
.toast {
  position: absolute; left: 1487px; top: 25px; width: 392px; height: 60px;
  display: flex; align-items: center; padding: 0 0 1px 16px; gap: 10px;
  background: #000d1f; border: 1px solid #46505f; border-radius: 8px; border-width: 1px 0;
  box-shadow: 0 6px 14px rgba(40, 60, 100, .18);
  font-family: "Noto Sans", sans-serif; font-size: 14px; color: #5b9cf0;
}
.toast-x {
  position: absolute; left: -6px; top: -6px; width: 21px; height: 21px; border-radius: 50%;
  background: #000d1f; border: 1px solid #1b2a44; display: flex; align-items: center; justify-content: center;
}
.toast-x svg { width: 10px; height: 10px; }
.toast-i { width: 18px; height: 18px; flex: none; margin-top: 2px; }
.next-badge {
  position: absolute; left: 21px; top: 810px; width: 42px; height: 42px; border-radius: 50%;
  background: #2f3236; border: 1px solid #0c0c0c; outline: 1px solid #5a5d60; outline-offset: -2px;
  color: #fff; display: flex; align-items: center; justify-content: center;
  font: 400 18px Inter, sans-serif; box-shadow: 0 6px 16px rgba(0, 0, 0, .12);
}

/* dock */
.dock {
  height: 54px; flex: none; display: flex; align-items: center; padding-left: 4px;
  background: radial-gradient(ellipse 420px 70px at 1000px 54px, #0f2032, transparent), #0f1113;
}
.dock-item { width: 52px; height: 54px; flex: none; display: flex; align-items: center; justify-content: center; position: relative; }
.dock-item svg { width: 35px; height: 35px; }
.dock-on::after { content: ""; position: absolute; left: 50%; bottom: 2px; width: 4px; height: 4px; margin-left: -2px; border-radius: 50%; background: #1a73e8; }
.dock-act::before { content: ""; position: absolute; left: 2px; right: -2px; top: 3px; bottom: 3px; background: #2d2e30; border-radius: 8px; }
.chrome {
  position: relative; width: 36px; height: 36px; border-radius: 50%;
  background: conic-gradient(from -30deg, #e8453c 0 120deg, #fcc934 120deg 240deg, #34a853 240deg);
  display: flex; align-items: center; justify-content: center;
}
.chrome-c { border-radius: 50%; background: #1a73e8; border: 3px solid #fff; box-sizing: content-box; width: 13px; height: 13px; }
.dock-sep { width: 1px; height: 36px; background: #3a3c3e; margin: 0 1px; flex: none; }
.dock-os { width: 28px; height: 28px; margin-left: auto; margin-right: 15px; }
```
